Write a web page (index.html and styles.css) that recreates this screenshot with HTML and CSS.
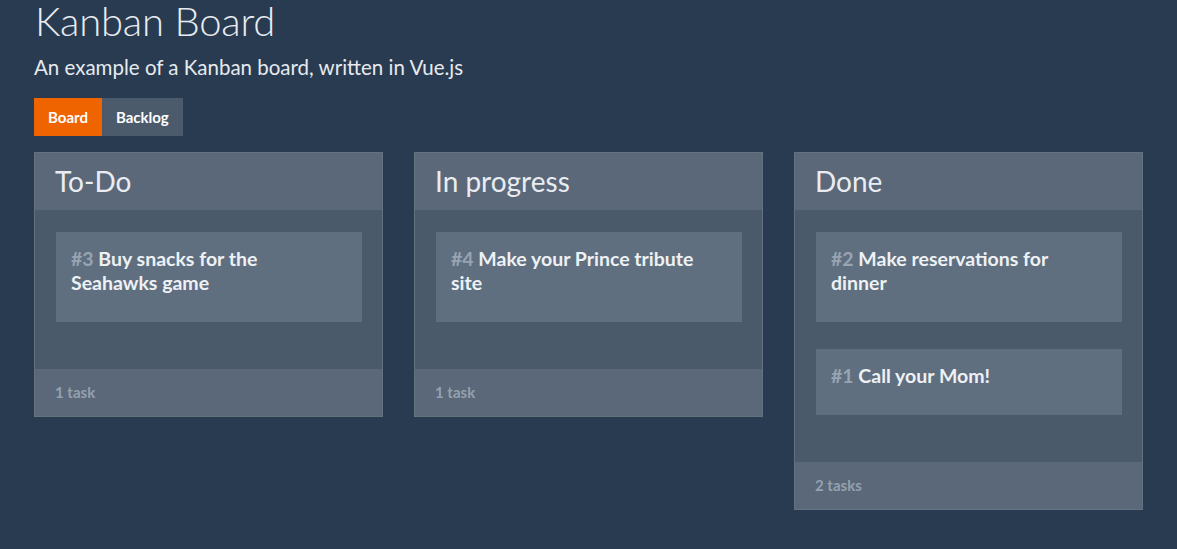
FILE: index.html
```html
<!DOCTYPE html>
<html>
<head>
<meta charset="utf-8">
<link rel="stylesheet" href="styles.css">
</head>
<body>
<div class="page">
  <h1 class="title">Kanban Board</h1>
  <p class="subtitle">An example of a Kanban board, written in Vue.js</p>
  <nav class="tabs">
    <a class="tab active">Board</a>
    <a class="tab">Backlog</a>
  </nav>
  <div class="board">
    <section class="column">
      <header class="col-head">To-Do</header>
      <div class="col-body">
        <div class="card"><span class="num">#3</span> Buy snacks for the Seahawks game</div>
      </div>
      <footer class="col-foot">1 task</footer>
    </section>
    <section class="column">
      <header class="col-head">In progress</header>
      <div class="col-body">
        <div class="card"><span class="num">#4</span> Make your Prince tribute site</div>
      </div>
      <footer class="col-foot">1 task</footer>
    </section>
    <section class="column">
      <header class="col-head">Done</header>
      <div class="col-body">
        <div class="card"><span class="num">#2</span> Make reservations for dinner</div>
        <div class="card"><span class="num">#1</span> Call your Mom!</div>
      </div>
      <footer class="col-foot">2 tasks</footer>
    </section>
  </div>
</div>
</body>
</html>
```
FILE: styles.css
```css
html, body {
  margin: 0;
  padding: 0;
  background: #293b51;
  font-family: Lato, "Open Sans", sans-serif;
  color: #e6eaee;
}
.page {
  padding: 0 34px;
}
.title {
  margin: 0;
  padding-top: 0;
  font-size: 40px;
  font-weight: 300;
  line-height: 42px;
  letter-spacing: -0.2px;
  padding-left: 1px;
  color: #e8ecf0;
}
.subtitle {
  margin: 13px 0 0 0;
  font-size: 20.5px;
  font-weight: 400;
  line-height: 24px;
  letter-spacing: 0;
  color: #e6eaee;
}
.tabs {
  display: flex;
  margin-top: 19px;
}
.tab {
  display: block;
  height: 38px;
  line-height: 38px;
  padding: 0 14px;
  font-size: 15px;
  font-weight: 700;
  color: #ffffff;
  background: #4b5b6c;
}
.tab.active {
  background: #f06400;
}
.board {
  display: grid;
  grid-template-columns: 349px 349px 349px;
  column-gap: 31px;
  align-items: start;
  margin-top: 16px;
}
.column {
  border: 1px solid #64717f;
  background: #4b5a6b;
}
.col-head {
  height: 57px;
  line-height: 57px;
  padding-left: 20px;
  background: #5a6879;
  font-size: 28px;
  font-weight: 400;
  color: #e9edf1;
}
.col-body {
  display: flex;
  flex-direction: column;
  gap: 27px;
  padding: 22px 20px 47px 21px;
}
.card {
  background: #5f6f80;
  padding: 15px 15px 27px 15px;
  font-size: 19.5px;
  font-weight: 700;
  line-height: 24px;
  color: #eef1f4;
}
.num {
  color: #98a4b1;
}
.col-foot {
  height: 47px;
  line-height: 47px;
  padding-left: 20px;
  background: #5a6879;
  font-size: 15px;
  font-weight: 700;
  color: #95a1ae;
}
```
